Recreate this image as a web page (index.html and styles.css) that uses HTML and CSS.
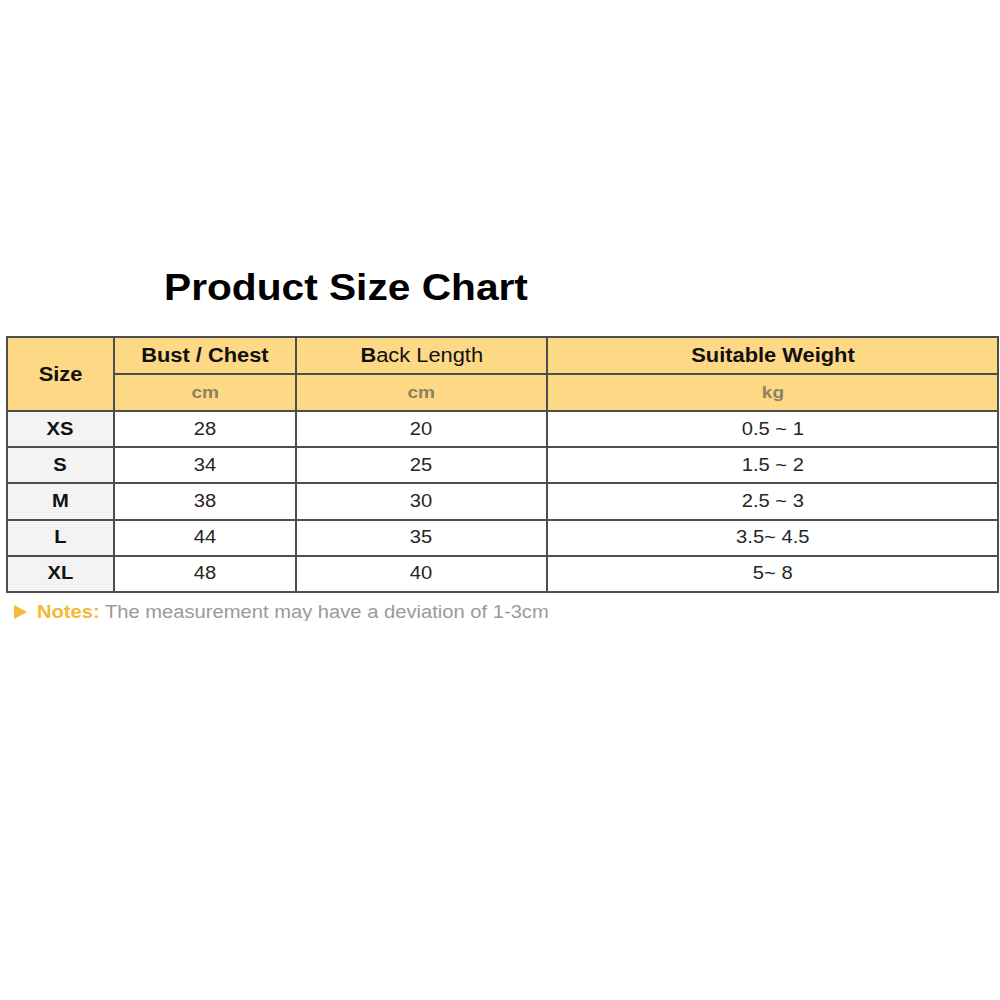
FILE: index.html
```html
<!DOCTYPE html>
<html lang="en">
<head>
<meta charset="utf-8">
<title>Product Size Chart</title>
<link rel="stylesheet" href="styles.css">
</head>
<body>
<main class="page">
  <h1 class="title"><span class="sx">Product Size Chart</span></h1>
  <table class="chart">
    <colgroup>
      <col class="c-size">
      <col class="c-bust">
      <col class="c-back">
      <col class="c-weight">
    </colgroup>
    <thead>
      <tr class="head-row">
        <th rowspan="2" class="size-head"><span class="sx">Size</span></th>
        <th><span class="sx">Bust / Chest</span></th>
        <th class="light"><span class="sx"><b>B</b>ack Length</span></th>
        <th><span class="sx">Suitable Weight</span></th>
      </tr>
      <tr class="unit-row">
        <th class="unit"><span class="sx">cm</span></th>
        <th class="unit"><span class="sx">cm</span></th>
        <th class="unit"><span class="sx">kg</span></th>
      </tr>
    </thead>
    <tbody>
      <tr><th class="size"><span class="sx">XS</span></th><td><span class="sx">28</span></td><td><span class="sx">20</span></td><td><span class="sx">0.5 ~ 1</span></td></tr>
      <tr><th class="size"><span class="sx">S</span></th><td><span class="sx">34</span></td><td><span class="sx">25</span></td><td><span class="sx">1.5 ~ 2</span></td></tr>
      <tr><th class="size"><span class="sx">M</span></th><td><span class="sx">38</span></td><td><span class="sx">30</span></td><td><span class="sx">2.5 ~ 3</span></td></tr>
      <tr><th class="size"><span class="sx">L</span></th><td><span class="sx">44</span></td><td><span class="sx">35</span></td><td><span class="sx">3.5~ 4.5</span></td></tr>
      <tr><th class="size"><span class="sx">XL</span></th><td><span class="sx">48</span></td><td><span class="sx">40</span></td><td><span class="sx">5~ 8</span></td></tr>
    </tbody>
  </table>
  <p class="notes">
    <svg class="tri" width="13" height="14" viewBox="0 0 13 14" aria-hidden="true"><polygon points="0,0 13,7 0,14" fill="#f5b833"/></svg>
    <span class="sx notes-text"><b class="notes-label">Notes:</b> The measurement may have a deviation of 1-3cm</span>
  </p>
</main>
</body>
</html>
```

FILE: styles.css
```css
html, body {
  margin: 0;
  padding: 0;
  background: #ffffff;
}

body {
  font-family: "Liberation Sans", Arial, Helvetica, sans-serif;
  color: #1a1a1a;
}

.page {
  padding: 270px 0 0 6px;
}

.sx {
  display: inline-block;
  transform: scaleX(1.12);
  white-space: nowrap;
}

.title {
  margin: 0 0 30px 0;
  padding-left: 158px;
  font-size: 36px;
  line-height: 36px;
  font-weight: bold;
  color: #000;
}

.title .sx {
  transform-origin: left center;
  transform: scaleX(1.13);
}

.chart {
  border-collapse: collapse;
  table-layout: fixed;
  width: 991px;
}

.c-size { width: 107px; }
.c-bust { width: 182px; }
.c-back { width: 251px; }
.c-weight { width: 451px; }

.chart th,
.chart td {
  border: 2px solid #4d4d4d;
  padding: 0;
  text-align: center;
  vertical-align: middle;
}

.chart thead th {
  background: #fdd885;
  font-size: 19.5px;
  font-weight: bold;
  color: #111111;
  height: 35px;
}

.chart thead th.light {
  font-weight: normal;
}

.chart thead th.unit {
  font-size: 17px;
  font-weight: bold;
  color: #8e8060;
}

.chart tbody tr {
  height: 36.2px;
}

.chart tbody td {
  background: #ffffff;
  font-size: 18px;
  color: #262626;
}

.chart tbody th.size {
  background: #f3f3f3;
  font-size: 18px;
  font-weight: bold;
  color: #111111;
}

.notes {
  margin: 10px 0 0 8px;
  display: flex;
  align-items: center;
  gap: 10px;
  font-size: 18px;
  line-height: 18px;
  color: #9a9a9a;
}

.tri {
  flex: none;
}

.notes-text {
  transform-origin: left center;
}

.notes-label {
  color: #f5b833;
}
```
